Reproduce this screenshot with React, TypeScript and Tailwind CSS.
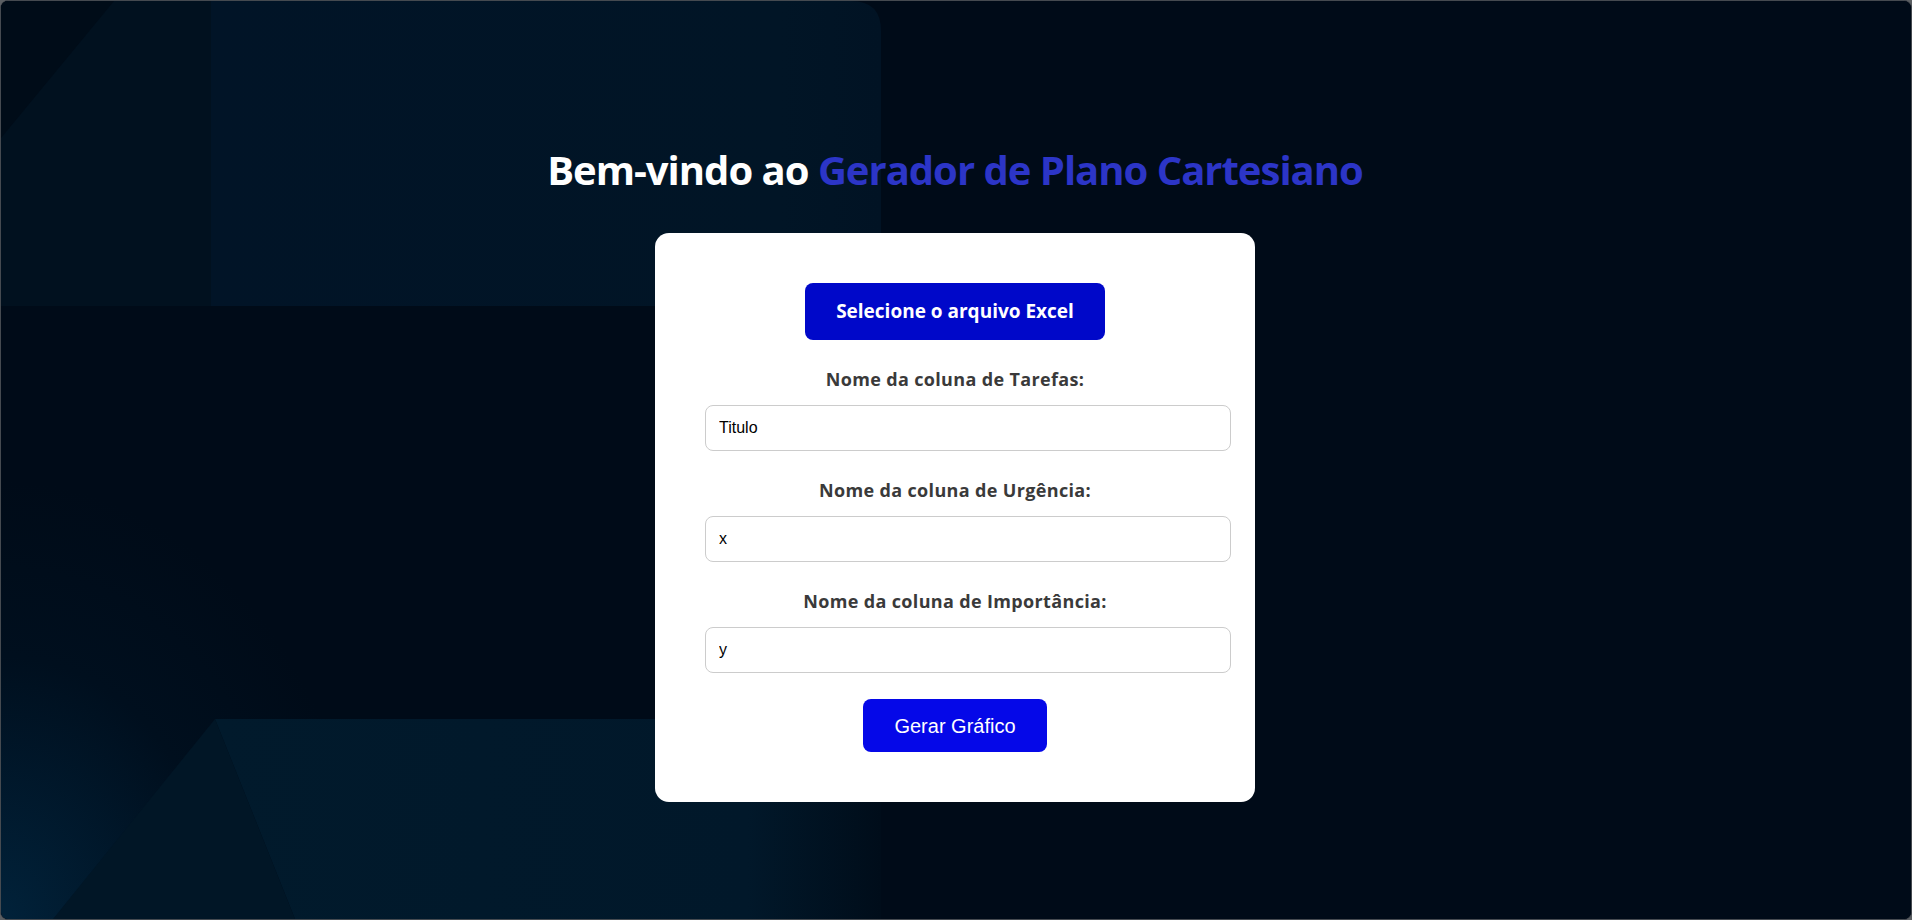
import React from "react";

const SANS = "font-['Open_Sans','Noto_Sans',sans-serif]";

function Background() {
  return (
    <svg
      className="absolute inset-0 h-full w-full"
      viewBox="0 0 1910 918"
      preserveAspectRatio="none"
      aria-hidden="true"
    >
      <defs>
        <linearGradient id="bottomPanel" x1="0" y1="0" x2="1" y2="0">
          <stop offset="0" stopColor="#011a2c" />
          <stop offset="0.8" stopColor="#01182a" />
          <stop offset="1" stopColor="#000d1a" />
        </linearGradient>
        <linearGradient id="topPanel" x1="0" y1="0" x2="1" y2="0">
          <stop offset="0" stopColor="#011427" />
          <stop offset="0.85" stopColor="#011526" />
          <stop offset="1" stopColor="#011324" />
        </linearGradient>
        <radialGradient id="corner" cx="0" cy="1" r="1">
          <stop offset="0" stopColor="#01223a" />
          <stop offset="0.6" stopColor="#000f1e" />
          <stop offset="1" stopColor="#000b18" />
        </radialGradient>
      </defs>
      <rect x="0" y="0" width="1910" height="918" fill="#000b18" />
      <rect x="0" y="480" width="360" height="438" fill="url(#corner)" />
      <path d="M210 0 H850 Q880 0 880 30 V305 H210 Z" fill="url(#topPanel)" />
      <rect x="0" y="0" width="210" height="305" fill="#01111f" />
      <polygon points="0,0 113,0 0,137" fill="#000c18" />
      <polygon points="214,718 880,718 880,918 294,918" fill="url(#bottomPanel)" />
      <polygon points="214,718 294,918 52,918" fill="#011626" />
    </svg>
  );
}

function Field({ label, value }: { label: string; value: string }) {
  return (
    <>
      <label
        className={`${SANS} mt-[27px] block h-[24px] text-center text-[18px] font-bold leading-[24px] tracking-[0.35px] text-[#3a3a3a]`}
      >
        {label}
      </label>
      <input
        type="text"
        defaultValue={value}
        className="mt-[14px] ml-[50px] h-[46px] w-[526px] self-start rounded-[8px] border border-[#cccccc] bg-white px-[13px] font-['Liberation_Sans',Arial,sans-serif] text-[16px] text-black outline-none"
      />
    </>
  );
}

export default function App() {
  return (
    <div className="h-[920px] w-full bg-[#5b5f63]">
      <div className="relative h-[920px] w-full overflow-hidden rounded-[8px] border border-[#454a50] bg-[#000b18]">
        <Background />
        <div className="relative z-10 flex flex-col items-center pt-[145px] pr-[2px]">
          <h1
            className={`${SANS} text-[40px] font-bold leading-[48px] tracking-[-1px] text-white`}
          >
            Bem-vindo ao <span className="text-[#2c35c7]">Gerador de Plano Cartesiano</span>
          </h1>
          <div className="mt-[39px] flex w-[600px] flex-col items-center rounded-[14px] bg-white pt-[50px] pb-[50px]">
            <button
              type="button"
              className={`${SANS} h-[57px] w-[300px] rounded-[8px] bg-[#0008c9] text-[19px] font-bold text-white`}
            >
              Selecione o arquivo Excel
            </button>
            <Field label="Nome da coluna de Tarefas:" value="Titulo" />
            <Field label="Nome da coluna de Urgência:" value="x" />
            <Field label="Nome da coluna de Importância:" value="y" />
            <button
              type="button"
              className="mt-[26px] h-[53px] rounded-[8px] bg-[#0508e8] px-[31px] font-['Liberation_Sans',Arial,sans-serif] text-[20px] text-white"
            >
              Gerar Gráfico
            </button>
          </div>
        </div>
      </div>
    </div>
  );
}
